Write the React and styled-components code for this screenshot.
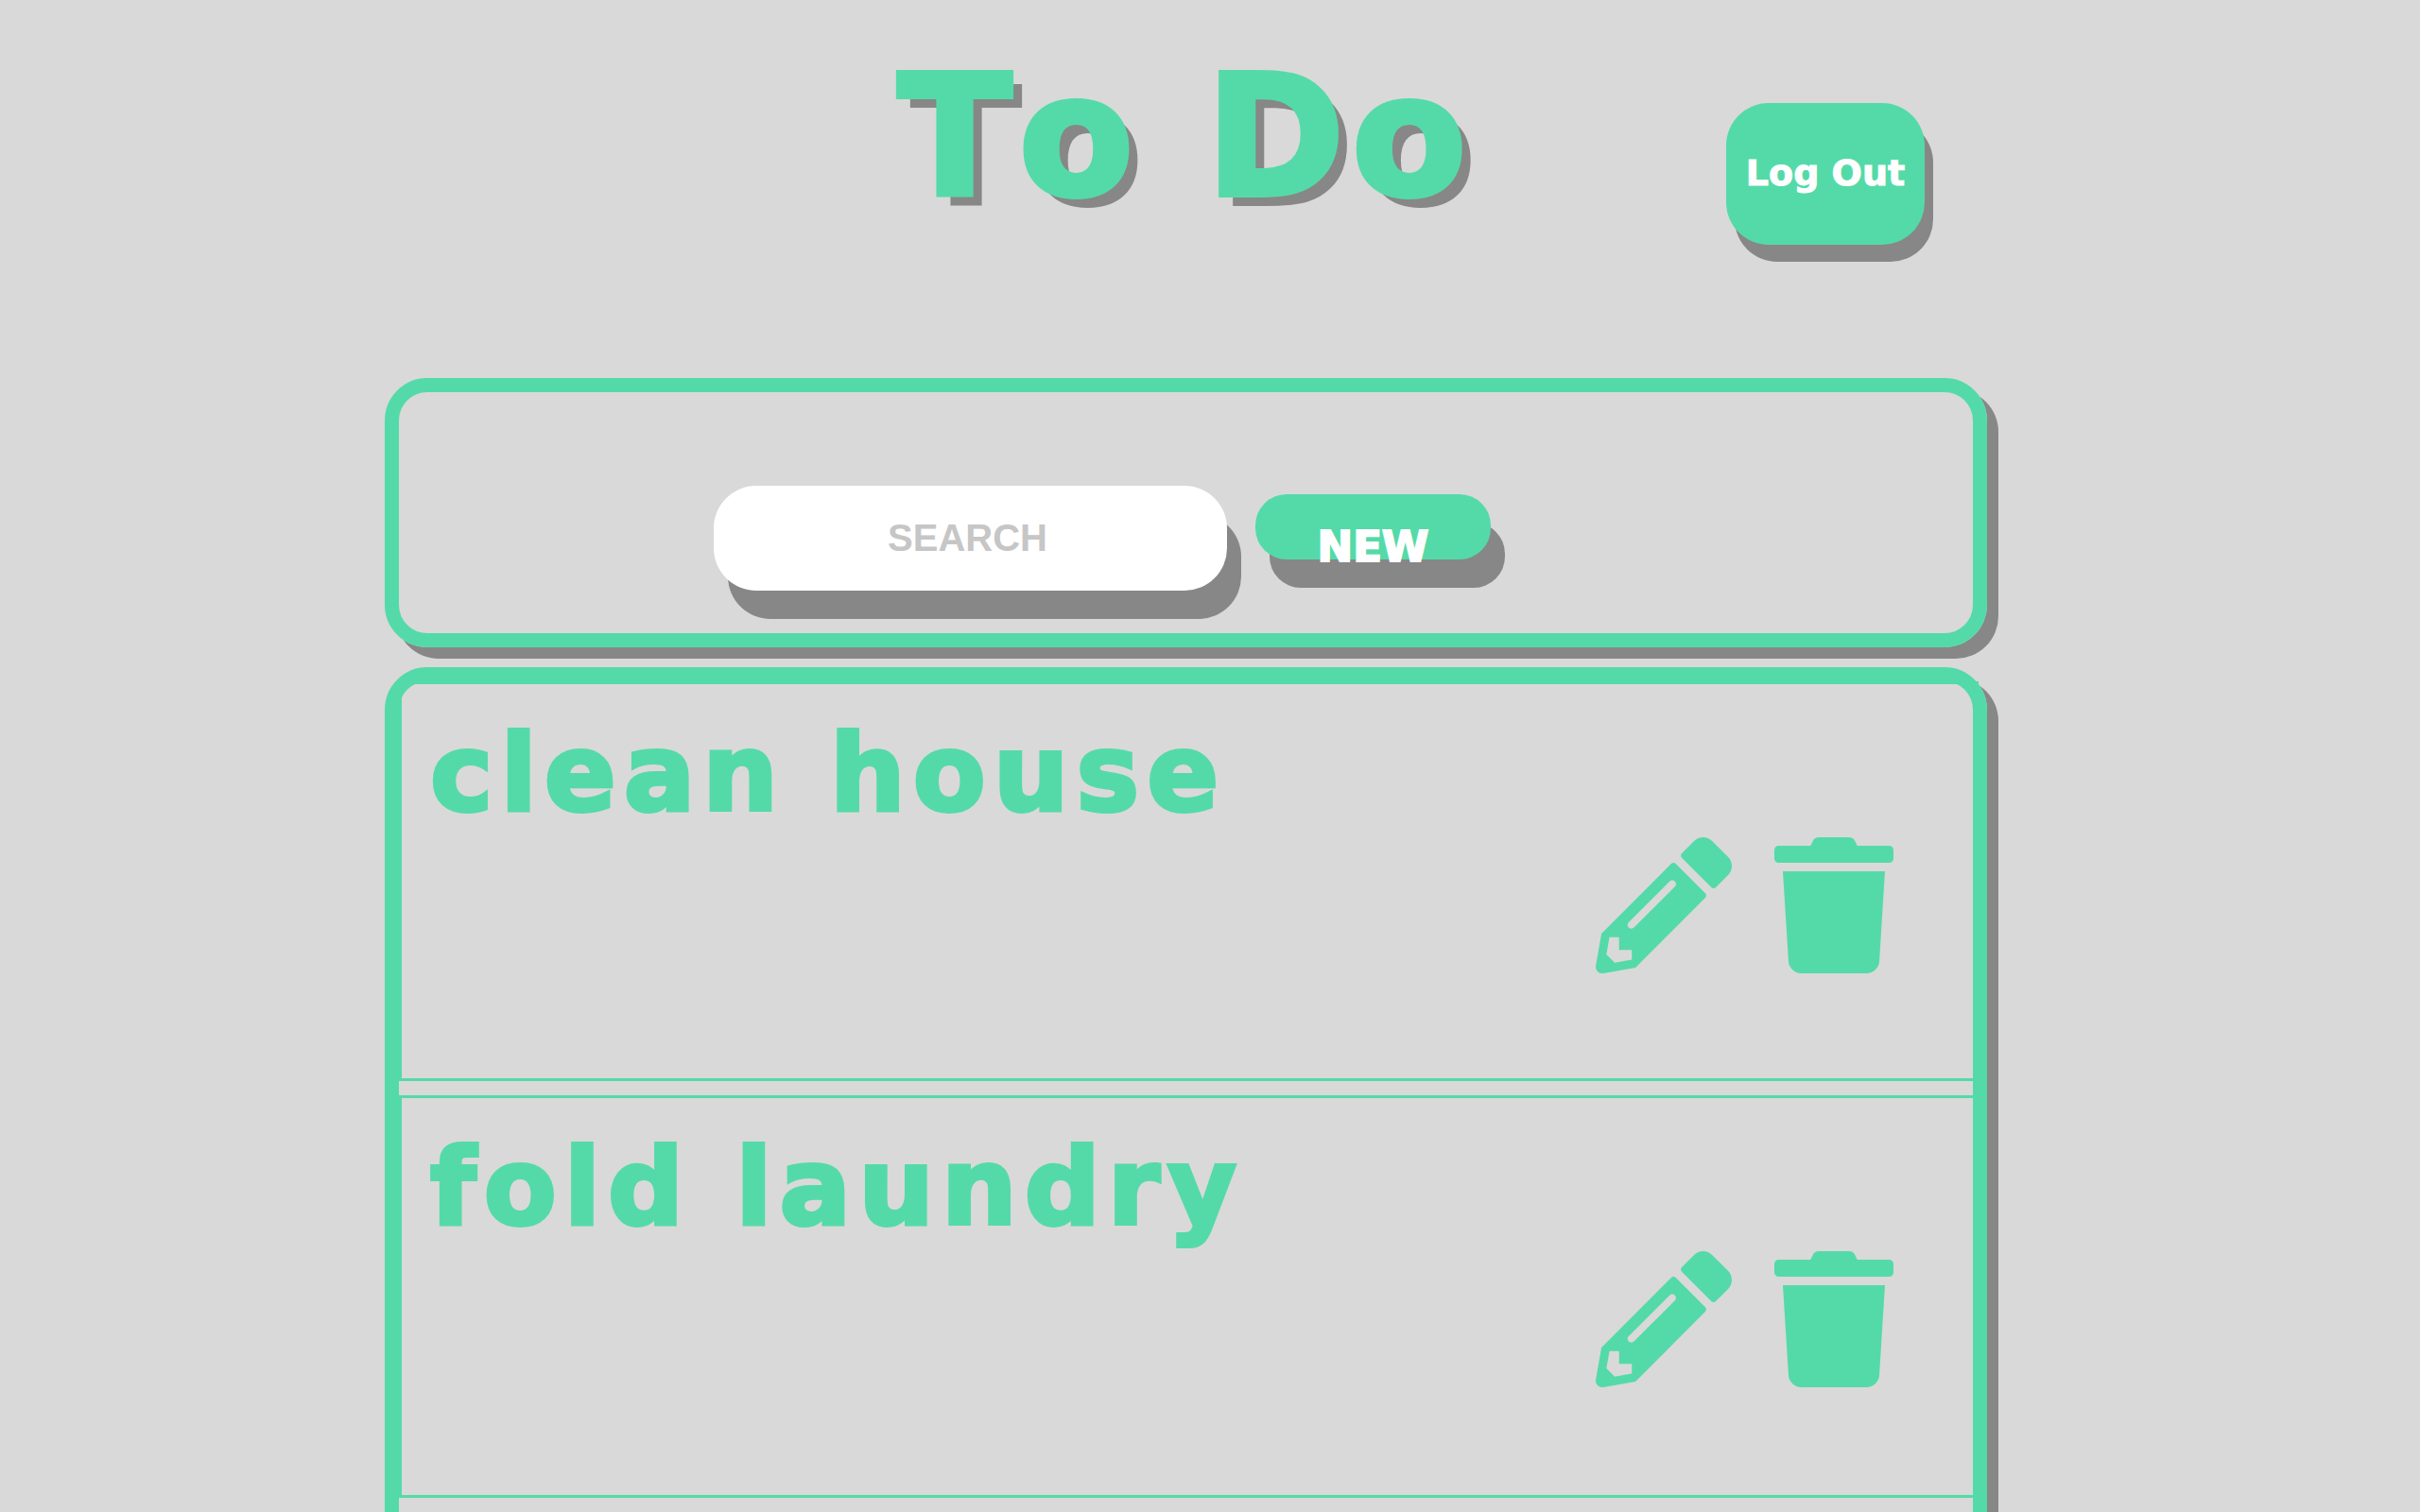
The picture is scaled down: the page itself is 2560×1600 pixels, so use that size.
import React from "react";
import styled, { createGlobalStyle } from "styled-components";
import { FaPencilAlt, FaTrash } from "react-icons/fa";

const green = "#54daa8";
const shadow = "#878787";

const GlobalStyle = createGlobalStyle`
  *, *::before, *::after { box-sizing: border-box; }
  body {
    margin: 0;
    background: #d9d9d9;
    font-family: "DejaVu Sans", Verdana, sans-serif;
    font-kerning: none;
  }
`;

const Page = styled.div`
  display: flex;
  flex-direction: column;
  height: 100vh;
  overflow: hidden;
  padding: 0 458px 0 407px;
`;

const Header = styled.header`
  display: grid;
  grid-template-columns: 1fr auto 1fr;
  align-items: start;
  flex: none;
  height: 400px;
  padding: 50px 66px 0 66px;
`;

const Title = styled.h1`
  grid-column: 2;
  margin: 0;
  color: ${green};
  font-size: 176px;
  font-weight: 900;
  line-height: 192px;
  letter-spacing: 8px;
  text-shadow: 12px 12px ${shadow};
  -webkit-text-stroke: 6px ${green};
`;

const Button = styled.button`
  display: flex;
  align-items: center;
  justify-content: center;
  border: 0;
  background: ${green};
  color: #fff;
  font-family: inherit;
  font-weight: 900;
  white-space: nowrap;
  cursor: pointer;
`;

const LogOutButton = styled(Button)`
  justify-self: end;
  width: 210px;
  height: 150px;
  margin-top: 59px;
  padding: 0 0 3px;
  border-radius: 45px;
  box-shadow: 9px 18px ${shadow};
  font-size: 38px;
  -webkit-text-stroke: 1px #fff;
`;

const NewButton = styled(Button)`
  width: 249px;
  height: 69px;
  margin-top: 9px;
  padding: 42px 0 0;
  border-radius: 33px;
  box-shadow: 15px 30px ${shadow};
  font-size: 45px;
  -webkit-text-stroke: 2px #fff;
`;

const Panel = styled.section`
  flex: none;
  border: 15px solid ${green};
  border-radius: 45px;
  box-shadow: 12px 12px ${shadow};
`;

const Toolbar = styled(Panel)`
  display: flex;
  align-items: flex-start;
  gap: 30px;
  margin-bottom: 21px;
  padding: 99px 0 45px 333px;
`;

const SearchInput = styled.input`
  width: 543px;
  height: 111px;
  padding: 0 6px 0 0;
  border: 0;
  border-radius: 45px;
  background: #fff;
  box-shadow: 15px 30px ${shadow};
  color: ${green};
  font-family: "Liberation Sans", Arial, sans-serif;
  font-size: 40px;
  font-weight: 700;
  text-align: center;

  &::placeholder {
    color: #c6c6c6;
    opacity: 1;
  }
`;

const TaskList = styled.ul`
  display: flex;
  flex-direction: column;
  gap: 15px;
  margin: 0;
  padding: 0 0 60px;
  list-style: none;
`;

const TaskRow = styled.li`
  box-sizing: content-box;
  width: 100%;
  min-height: 417px;
  border: 3px solid ${green};

  &:nth-child(even) {
    min-height: 420px;
  }
`;

const TaskName = styled.h2`
  margin: 0;
  padding: 27px 30px 0;
  color: ${green};
  font-size: 112px;
  font-weight: 900;
  line-height: 135px;
  letter-spacing: 8px;
  -webkit-text-stroke: 4px ${green};
`;

const Actions = styled.div`
  display: flex;
  justify-content: flex-end;
  gap: 45px;
  padding-right: 87px;
`;

const IconButton = styled.button`
  display: flex;
  padding: 0;
  border: 0;
  background: none;
  color: ${green};
  cursor: pointer;

  svg {
    width: ${(p) => p.$width}px;
    height: 144px;
  }
`;

const tasks = ["clean house", "fold laundry"];

function Task({ name }) {
  return (
    <TaskRow>
      <TaskName>{name}</TaskName>
      <Actions>
        <IconButton type="button" $width={144} aria-label="Edit">
          <FaPencilAlt />
        </IconButton>
        <IconButton type="button" $width={126} aria-label="Delete">
          <FaTrash />
        </IconButton>
      </Actions>
    </TaskRow>
  );
}

export default function App() {
  return (
    <>
      <GlobalStyle />
      <Page>
        <Header>
          <Title>To Do</Title>
          <LogOutButton type="button">Log Out</LogOutButton>
        </Header>
        <Toolbar>
          <SearchInput type="text" placeholder="SEARCH" aria-label="Search" />
          <NewButton type="button">NEW</NewButton>
        </Toolbar>
        <Panel>
          <TaskList>
            {tasks.map((name) => (
              <Task key={name} name={name} />
            ))}
          </TaskList>
        </Panel>
      </Page>
    </>
  );
}
